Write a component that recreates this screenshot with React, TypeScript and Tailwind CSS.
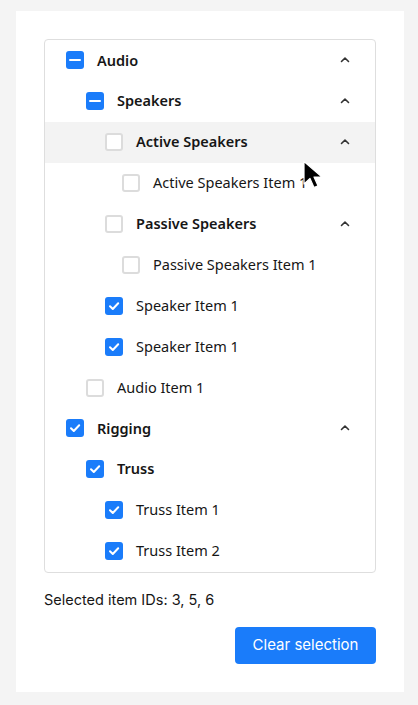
import React from "react";

type State = "checked" | "indeterminate" | "unchecked";

function Box({ state }: { state: State }) {
  if (state === "unchecked") {
    return <div className="w-[18px] h-[18px] shrink-0 rounded-[3px] border-2 border-[#dcdcdc] bg-white" />;
  }
  return (
    <div className="w-[18px] h-[18px] shrink-0 rounded-[3px] bg-[#1a7cfa] flex items-center justify-center">
      {state === "checked" ? (
        <svg width="12" height="12" viewBox="0 0 12 12" fill="none">
          <path d="M2 6.2 L4.8 9 L10.2 3.2" stroke="white" strokeWidth="2" strokeLinecap="round" strokeLinejoin="round" />
        </svg>
      ) : (
        <div className="w-[12px] h-[2px] bg-white rounded-[1px]" />
      )}
    </div>
  );
}

function Chevron() {
  return (
    <svg width="10" height="10" viewBox="0 0 10 10" fill="none" className="mr-[25px]">
      <path d="M1.5 6.5 L5 3 L8.5 6.5" stroke="#333" strokeWidth="1.6" strokeLinecap="round" strokeLinejoin="round" />
    </svg>
  );
}

type Row = { label: string; pad: number; state: State; bold?: boolean; chevron?: boolean; hover?: boolean };

const rows: Row[] = [
  { label: "Audio", pad: 21, state: "indeterminate", bold: true, chevron: true },
  { label: "Speakers", pad: 41, state: "indeterminate", bold: true, chevron: true },
  { label: "Active Speakers", pad: 60, state: "unchecked", bold: true, chevron: true, hover: true },
  { label: "Active Speakers Item 1", pad: 77, state: "unchecked" },
  { label: "Passive Speakers", pad: 60, state: "unchecked", bold: true, chevron: true },
  { label: "Passive Speakers Item 1", pad: 77, state: "unchecked" },
  { label: "Speaker Item 1", pad: 60, state: "checked" },
  { label: "Speaker Item 1", pad: 60, state: "checked" },
  { label: "Audio Item 1", pad: 41, state: "unchecked" },
  { label: "Rigging", pad: 21, state: "checked", bold: true, chevron: true },
  { label: "Truss", pad: 41, state: "checked", bold: true },
  { label: "Truss Item 1", pad: 60, state: "checked" },
  { label: "Truss Item 2", pad: 60, state: "checked" },
];

export default function App() {
  return (
    <div className="min-h-[705px] w-full bg-[#f4f4f4] pt-[11px] pb-[12px] px-[14px]" style={{ fontFamily: "'Noto Sans', sans-serif" }}>
      <div className="bg-white w-[388px] ml-[2px] p-[28px] relative">
        <div className="border border-[#dedede] rounded-[4px] overflow-hidden">
          {rows.map((r, i) => (
            <div
              key={i}
              className={`h-[40.9px] flex items-center ${r.hover ? "bg-[#f3f3f3]" : ""}`}
              style={{ paddingLeft: r.pad }}
            >
              <Box state={r.state} />
              <span
                className={`ml-[13px] flex-1 text-[14.5px] text-[#161616] ${r.bold ? "font-semibold" : "font-normal"}`}
              >
                {r.label}
              </span>
              {r.chevron && <Chevron />}
            </div>
          ))}
        </div>
        <div className="mt-[17px] text-[14.5px] text-[#161616] leading-[20px]" style={{ fontFamily: "Inter, sans-serif" }}>
          Selected item IDs: 3, 5, 6
        </div>
        <div className="flex justify-end mt-[17px]">
          <button
            className="w-[141px] h-[37px] rounded-[4px] bg-[#1a7cfa] text-white text-[15px]"
            style={{ fontFamily: "Inter, sans-serif" }}
          >
            Clear selection
          </button>
        </div>
        <svg className="absolute left-[286px] top-[149px]" width="24" height="32" viewBox="0 0 24 32">
          <path d="M2 1.5 L2 24 L8 18.5 L12 27.5 L16 25.8 L12 17 L20 17 Z" fill="black" stroke="white" strokeWidth="1.2" strokeLinejoin="round" />
        </svg>
      </div>
    </div>
  );
}
